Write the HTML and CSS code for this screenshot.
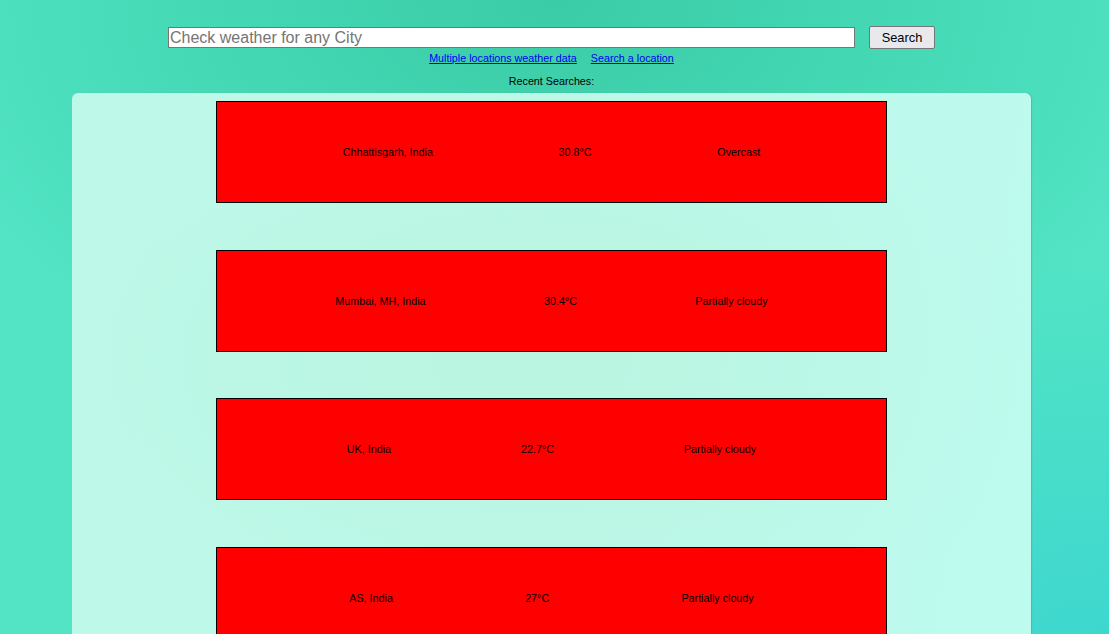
FILE: index.html
```html
<!DOCTYPE html>
<html lang="en">
<head>
<meta charset="utf-8">
<title>Weather</title>
<link rel="stylesheet" href="styles.css">
</head>
<body>
<div class="page">
  <form class="search-row">
    <input class="city-input" type="text" placeholder="Check weather for any City">
    <button class="search-btn" type="button">Search</button>
  </form>
  <nav class="links">
    <a href="#">Multiple locations weather data</a>
    <a href="#">Search a location</a>
  </nav>
  <p class="recent-title">Recent Searches:</p>
  <section class="card">
    <div class="result">
      <span>Chhattisgarh, India</span>
      <span>30.8°C</span>
      <span>Overcast</span>
    </div>
    <div class="result">
      <span>Mumbai, MH, India</span>
      <span>30.4°C</span>
      <span>Partially cloudy</span>
    </div>
    <div class="result">
      <span>UK, India</span>
      <span>22.7°C</span>
      <span>Partially cloudy</span>
    </div>
    <div class="result">
      <span>AS, India</span>
      <span>27°C</span>
      <span>Partially cloudy</span>
    </div>
  </section>
</div>
</body>
</html>
```

FILE: styles.css
```css
html, body {
  margin: 0;
  padding: 0;
  height: 100%;
  overflow: hidden;
}

body {
  font-family: "Liberation Sans", Arial, sans-serif;
  background:
    radial-gradient(ellipse 70% 60% at 100% 100%, rgba(60, 214, 208, 0.9) 0%, rgba(60, 214, 208, 0) 100%),
    radial-gradient(ellipse 60% 70% at 50% 0%, #3acca6 0%, #45d9b6 55%, #52e4c4 100%);
  background-color: #52e4c4;
}

.page {
  margin: 0 78px 0 72px;
  display: flex;
  flex-direction: column;
  align-items: center;
}

.search-row {
  margin: 26px 0 0;
  display: flex;
  align-items: center;
  gap: 14px;
}

.city-input {
  box-sizing: border-box;
  width: 687px;
  height: 21px;
  margin: 0;
  padding: 0 1px;
  border: 1px solid #767676;
  font-family: "Liberation Sans", Arial, sans-serif;
  font-size: 16px;
  background: #fff;
}

.city-input::placeholder {
  color: #757575;
}

.search-btn {
  box-sizing: border-box;
  width: 66px;
  height: 23px;
  margin: 0;
  padding: 0;
  border: 1px solid #767676;
  border-radius: 2px;
  background: #e9e9ed;
  color: #000;
  font-family: "Liberation Sans", Arial, sans-serif;
  font-size: 12.8px;
}

.links {
  margin-top: 2px;
  display: flex;
  gap: 14px;
  font-size: 10.75px;
  line-height: 14px;
}

.links a {
  color: #0000ee;
}

.recent-title {
  margin: 9px 0 0;
  font-size: 10.75px;
  line-height: 14px;
  color: #000;
}

.card {
  box-sizing: border-box;
  margin-top: 5px;
  width: 959px;
  min-height: 700px;
  padding-top: 8px;
  border-radius: 6px;
  background:
    radial-gradient(ellipse 55% 45% at 48% 38%, #b9f5e0 0%, rgba(190, 248, 232, 0) 100%),
    linear-gradient(100deg, #bef8e9 0%, #bdf8ea 60%, #befcf0 100%);
  box-shadow: 1px 0 1px rgba(160, 120, 140, 0.5);
  display: flex;
  flex-direction: column;
  align-items: center;
  gap: 46.6px;
}

.result {
  box-sizing: border-box;
  width: 671px;
  height: 102px;
  border: 1px solid #000;
  background: #ff0000;
  display: flex;
  justify-content: space-evenly;
  align-items: center;
  font-size: 10.75px;
  color: #000;
}
```
